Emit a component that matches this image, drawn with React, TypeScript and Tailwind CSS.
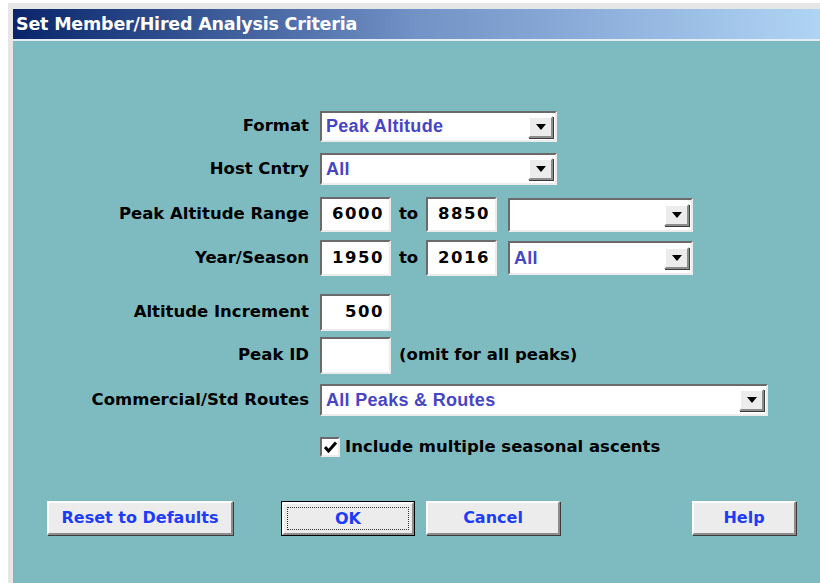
import React from 'react';

const LABEL = "font-['DejaVu_Sans',sans-serif] font-bold text-[16.5px] text-black";
const SUNKEN =
  'bg-white border-2 border-t-[#6a6a6a] border-l-[#6a6a6a] border-r-[#ececec] border-b-[#ececec]';
const RAISED =
  'bg-[#ececec] border-2 border-t-white border-l-white border-r-[#8c8c8c] border-b-[#8c8c8c] shadow-[1px_1px_0_#3c3c3c]';

function ArrowButton() {
  return (
    <div className={`w-[25px] h-[22px] flex items-center justify-center ${RAISED}`}>
      <svg width="10" height="6" viewBox="0 0 10 6">
        <path d="M0 0h10L5 6z" fill="#000" />
      </svg>
    </div>
  );
}

function Dropdown({ value, width, height }: { value: string; width: number; height: number }) {
  return (
    <div
      className={`flex items-center justify-between pl-[4px] pr-[2px] ${SUNKEN}`}
      style={{ width, height }}
    >
      <span className="font-['Liberation_Sans',Arial,sans-serif] font-bold text-[18px] text-[#4646c4] tracking-[0.3px]">
        {value}
      </span>
      <ArrowButton />
    </div>
  );
}

function NumBox({ value, height }: { value: string; height: number }) {
  return (
    <div
      className={`w-[71px] flex items-center justify-end pr-[5px] ${SUNKEN} ${LABEL} tracking-[1.5px]`}
      style={{ height }}
    >
      {value}
    </div>
  );
}

function Row({ label, top, height, children }: { label: string; top: number; height: number; children: React.ReactNode }) {
  return (
    <div className="flex items-center" style={{ marginTop: top, height }}>
      <div className={`w-[296px] text-right ${LABEL}`}>{label}</div>
      <div className="ml-[11px] flex items-center">{children}</div>
    </div>
  );
}

function Button({ label, width, focused }: { label: string; width: number; focused?: boolean }) {
  const text = "font-['DejaVu_Sans',sans-serif] font-bold text-[16px] text-[#1d3cf5]";
  if (focused) {
    return (
      <div className="border border-black h-[35px]" style={{ width }}>
        <div className={`h-full p-[3px] ${RAISED} shadow-none`}>
          <div className={`h-full border border-dotted border-[#333] flex items-center justify-center ${text}`}>
            {label}
          </div>
        </div>
      </div>
    );
  }
  return (
    <div className={`h-[34px] flex items-center justify-center ${RAISED} ${text}`} style={{ width }}>
      {label}
    </div>
  );
}

export default function App() {
  return (
    <div className="w-[820px] h-[583px] bg-white pl-[8px] pt-[3px] overflow-hidden">
      <div className="h-full bg-[#e6e6e6] pl-[5px] pt-[6px] flex flex-col">
        {/* caption */}
        <div className="h-[30px] flex items-center pl-[3px] bg-gradient-to-r from-[#0a246a] via-[#7392c6] via-50% to-[#b0d4f4]">
          <span className="font-['DejaVu_Sans',sans-serif] font-bold text-[17.5px] text-white tracking-[-0.2px]">
            Set Member/Hired Analysis Criteria
          </span>
        </div>
        <div className="h-[2px] bg-[#e4ecf2]" />

        {/* client area */}
        <div className="flex-1 bg-[#7ebbc0] flex flex-col">
          <Row label="Format" top={70} height={31}>
            <Dropdown value="Peak Altitude" width={237} height={31} />
          </Row>
          <Row label="Host Cntry" top={11} height={32}>
            <Dropdown value="All" width={237} height={32} />
          </Row>
          <Row label="Peak Altitude Range" top={12} height={35}>
            <NumBox value="6000" height={35} />
            <span className={`w-[35px] text-center ${LABEL}`}>to</span>
            <NumBox value="8850" height={35} />
            <div className="ml-[11px]">
              <Dropdown value="" width={185} height={34} />
            </div>
          </Row>
          <Row label="Year/Season" top={8} height={36}>
            <NumBox value="1950" height={36} />
            <span className={`w-[35px] text-center ${LABEL}`}>to</span>
            <NumBox value="2016" height={36} />
            <div className="ml-[11px]">
              <Dropdown value="All" width={185} height={34} />
            </div>
          </Row>
          <Row label="Altitude Increment" top={18} height={37}>
            <NumBox value="500" height={37} />
          </Row>
          <Row label="Peak ID" top={6} height={37}>
            <NumBox value="" height={37} />
            <span className={`ml-[8px] ${LABEL}`}>(omit for all peaks)</span>
          </Row>
          <Row label="Commercial/Std Routes" top={10} height={32}>
            <Dropdown value="All Peaks & Routes" width={448} height={32} />
          </Row>

          <div className="flex items-center mt-[21px] h-[20px] pl-[307px]">
            <div className={`w-[20px] h-[20px] flex items-center justify-center ${SUNKEN}`}>
              <svg width="13" height="12" viewBox="0 0 13 12">
                <path d="M1 6l3.5 4L12 1.5" stroke="#000" strokeWidth="3" fill="none" />
              </svg>
            </div>
            <span className={`ml-[5px] ${LABEL}`}>Include multiple seasonal ascents</span>
          </div>

          <div className="flex items-start mt-[44px] pl-[34px]">
            <Button label="Reset to Defaults" width={186} />
            <div className="ml-[48px]">
              <Button label="OK" width={134} focused />
            </div>
            <div className="ml-[11px]">
              <Button label="Cancel" width={134} />
            </div>
            <div className="ml-[132px]">
              <Button label="Help" width={104} />
            </div>
          </div>
        </div>
      </div>
    </div>
  );
}
